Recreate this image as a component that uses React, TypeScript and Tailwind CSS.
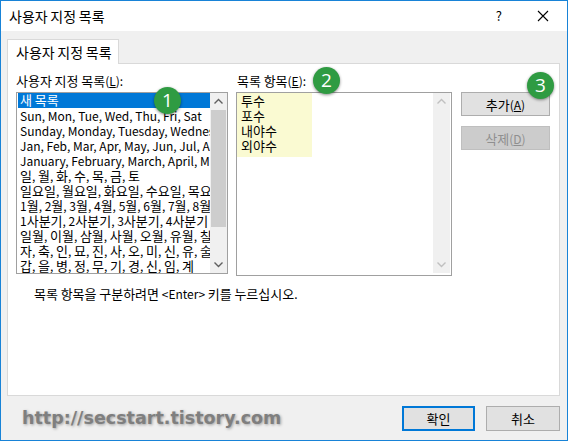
import React from "react";

const F = { fontFamily: '"Noto Sans CJK KR", "Noto Sans", sans-serif' };

function K({ t, big }: { t: string; big?: boolean }) {
  const parts = t.split(/([\uAC00-\uD7A3\u3131-\u318E]+)/);
  return (
    <>
      {parts.map((p, i) =>
        i % 2 === 1 ? (
          <span key={i} className={big ? "text-[14px]" : "text-[13px]"}>
            {p}
          </span>
        ) : (
          <React.Fragment key={i}>{p}</React.Fragment>
        )
      )}
    </>
  );
}

const leftRows = [
  "Sun, Mon, Tue, Wed, Thu, Fri, Sat",
  "Sunday, Monday, Tuesday, Wednesday, Thursday, Friday, Saturday",
  "Jan, Feb, Mar, Apr, May, Jun, Jul, Aug, Sep, Oct, Nov, Dec",
  "January, February, March, April, May, June, July",
  "일, 월, 화, 수, 목, 금, 토",
  "일요일, 월요일, 화요일, 수요일, 목요일, 금요일, 토요일",
  "1월, 2월, 3월, 4월, 5월, 6월, 7월, 8월, 9월",
  "1사분기, 2사분기, 3사분기, 4사분기",
  "일월, 이월, 삼월, 사월, 오월, 유월, 칠월",
  "자, 축, 인, 묘, 진, 사, 오, 미, 신, 유, 술, 해",
  "갑, 을, 병, 정, 무, 기, 경, 신, 임, 계",
];

function Chevron({ up, color }: { up: boolean; color: string }) {
  return (
    <svg width="17" height="17" viewBox="0 0 17 17">
      <path
        d={up ? "M4.5 10.5 L8.5 6.5 L12.5 10.5" : "M4.5 6.5 L8.5 10.5 L12.5 6.5"}
        fill="none"
        stroke={color}
        strokeWidth="1.4"
      />
    </svg>
  );
}

function Badge({ n, cls }: { n: string; cls: string }) {
  return (
    <div
      className={`absolute w-[27px] h-[27px] rounded-full bg-[#2f9b42] text-white flex items-center justify-center text-[19px] leading-none shadow-[0_1px_3px_rgba(0,0,0,0.45)] ${cls}`}
      style={{ fontFamily: '"Open Sans", "Noto Sans", sans-serif' }}
    >
      {n}
    </div>
  );
}

export default function App() {
  return (
    <div
      className="relative w-[568px] h-[441px] border border-[#1883d7] flex flex-col text-[12px] text-black bg-[#f0f0f0] overflow-hidden"
      style={F}
    >
      {/* Title bar */}
      <div className="h-[30px] bg-white flex items-center shrink-0">
        <span className="ml-[8px] leading-[15px]">
          <K t="사용자 지정 목록" big />
        </span>
        <span className="ml-auto mr-[35px] text-[13px]">?</span>
        <svg width="12" height="12" viewBox="0 0 12 12" className="mr-[18px]">
          <path d="M1 1 L11 11 M11 1 L1 11" stroke="#000" strokeWidth="1.1" />
        </svg>
      </div>

      {/* Body */}
      <div className="flex-1 flex flex-col pl-[6px] pr-[7px] pt-[8px]">
        <div className="relative z-10 -mb-px w-[112px] h-[25px] bg-white border border-b-0 border-[#d9d9d9] flex items-center pl-[8px] leading-[15px]">
          <span className="whitespace-nowrap">
            <K t="사용자 지정 목록" big />
          </span>
        </div>
        <div className="h-[333px] bg-white border border-[#d9d9d9] pl-[8px] pt-[9px] flex flex-col">
          <div className="flex">
            {/* Left column */}
            <div className="flex flex-col w-[212px]">
              <div className="h-[15px] leading-[15px] mb-[4px] whitespace-nowrap">
                <K t="사용자 지정 목록" />(<span className="underline">L</span>):
              </div>
              <div className="h-[182px] border border-[#a0a0a0] flex">
                <div className="flex-1 overflow-hidden">
                  <div className="h-[15px] leading-[14px] bg-[#0078d7] text-white ml-px pl-[2px] whitespace-nowrap">
                    <K t="새 목록" />
                  </div>
                  {leftRows.map((r) => (
                    <div key={r} className="h-[15px] leading-[15px] pl-[3px] whitespace-nowrap">
                      <K t={r} />
                    </div>
                  ))}
                </div>
                <div className="w-[17px] bg-[#f0f0f0] flex flex-col">
                  <Chevron up color="#606060" />
                  <div className="h-[117px] mx-px bg-[#cdcdcd]" />
                  <div className="flex-1" />
                  <Chevron up={false} color="#606060" />
                </div>
              </div>
            </div>

            {/* Middle column */}
            <div className="flex flex-col w-[216px] ml-[8px]">
              <div className="h-[15px] leading-[15px] mb-[4px] pl-px whitespace-nowrap">
                <K t="목록 항목" />(<span className="underline">E</span>):
              </div>
              <div className="h-[184px] border border-[#a0a0a0] flex">
                <div className="flex-1">
                  <div className="w-[75px] bg-[#fafad2] pb-[4px] pl-[4px]">
                    <div className="h-[15px] leading-[15px]"><K t="투수" /></div>
                    <div className="h-[15px] leading-[15px]"><K t="포수" /></div>
                    <div className="h-[15px] leading-[15px]"><K t="내야수" /></div>
                    <div className="h-[15px] leading-[15px]"><K t="외야수" /></div>
                  </div>
                </div>
                <div className="w-[17px] mr-px mb-[2px] bg-[#f0f0f0] flex flex-col justify-between">
                  <Chevron up color="#c0c0c0" />
                  <Chevron up={false} color="#c0c0c0" />
                </div>
              </div>
            </div>

            {/* Buttons column */}
            <div className="flex flex-col ml-[9px] pt-[19px] gap-[10px]">
              <div className="w-[89px] h-[24px] bg-[#e1e1e1] border border-[#adadad] flex items-center justify-center leading-[15px]">
                <span className="whitespace-nowrap">
                  <K t="추가" />(<span className="underline">A</span>)
                </span>
              </div>
              <div className="w-[89px] h-[24px] bg-[#cccccc] border border-[#bfbfbf] flex items-center justify-center leading-[15px] text-[#8f8f8f]">
                <span className="whitespace-nowrap">
                  <K t="삭제" />(<span className="underline">D</span>)
                </span>
              </div>
            </div>
          </div>

          <div className="mt-[10px] ml-[18px] h-[15px] leading-[15px] whitespace-nowrap">
            <K t="목록 항목을 구분하려면 <Enter> 키를 누르십시오." />
          </div>
        </div>

        {/* Bottom row */}
        <div className="flex items-center mt-[10px] h-[25px]">
          <div
            className="ml-[15px] text-[17.5px] font-bold text-[#7f7f7f] [text-shadow:1px_1px_3px_rgba(0,0,0,0.35)] leading-none"
            style={{ fontFamily: '"DejaVu Sans", sans-serif' }}
          >
            http://secstart.tistory.com
          </div>
          <div className="ml-auto flex gap-[11px]">
            <div className="w-[73px] h-[25px] bg-[#e1e1e1] border-2 border-[#0078d7] flex items-center justify-center leading-[15px]">
              <span><K t="확인" /></span>
            </div>
            <div className="w-[74px] h-[25px] bg-[#e1e1e1] border border-[#adadad] flex items-center justify-center leading-[15px]">
              <span><K t="취소" /></span>
            </div>
          </div>
        </div>
      </div>

      <Badge n="1" cls="left-[153px] top-[86px]" />
      <Badge n="2" cls="left-[312px] top-[66px]" />
      <Badge n="3" cls="left-[526px] top-[71px]" />
    </div>
  );
}
